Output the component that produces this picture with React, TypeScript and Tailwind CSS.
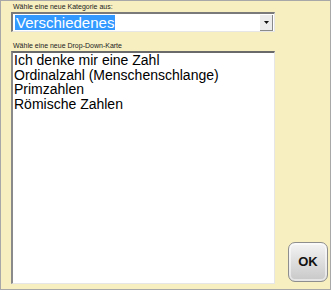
import React from 'react';

const items = ['Ich denke mir eine Zahl', 'Ordinalzahl (Menschenschlange)', 'Primzahlen', 'Römische Zahlen'];

export default function App() {
    return (
        <div className="w-[332px] h-[291px] bg-white" style={{ fontFamily: '"Liberation Sans", Arial, sans-serif' }}>
            <div className="w-[331px] h-[290px] bg-[#f7efc0] border border-[#a8a8a8] flex">
                <div className="w-[264px] ml-[10px] flex flex-col">
                    <p className="text-[7px] leading-[11px] text-[#222] ml-[2px]">Wähle eine neue Kategorie aus:</p>
                    <div className="h-[20px] bg-white border-t-2 border-l-2 border-t-[#7a7a7a] border-l-[#7a7a7a] border-b border-r border-b-[#e6e6e6] border-r-[#e6e6e6] flex items-center">
                        <span className="ml-[2px] px-[1px] bg-[#3399ff] text-white text-[15px] leading-[15px]">Verschiedenes</span>
                        <div className="ml-auto mr-[1px] w-[13px] h-[16px] bg-[#ececec] border-r border-b border-[#8a8a8a] flex items-center justify-center">
                            <svg width="5" height="3" viewBox="0 0 5 3"><path d="M0 0h5L2.5 3z" fill="#111" /></svg>
                        </div>
                    </div>
                    <p className="text-[7px] leading-[11px] text-[#222] mt-[8px] ml-[2px]">Wähle eine neue Drop-Down-Karte</p>
                    <div className="flex-1 mb-[5px] bg-white border-t-2 border-l-2 border-t-[#6a6a6a] border-l-[#8a8a8a] border-b border-r border-b-[#e6e6e6] border-r-[#e6e6e6] pl-[1px]">
                        {items.map(item => (
                            <div key={item} className="text-[14px] leading-[14.5px] text-black">{item}</div>
                        ))}
                    </div>
                </div>
                <div className="flex-1 flex flex-col justify-end items-end pb-[7px] pr-[2px]">
                    <button className="w-[40px] h-[40px] rounded-[7px] border border-[#8e8e8e] bg-gradient-to-b from-[#f4f4f4] to-[#c8c8c8] shadow-[inset_0_0_0_2px_rgba(255,255,255,0.5)] text-[13px] font-bold text-[#111]">OK</button>
                </div>
            </div>
        </div>
    );
}
